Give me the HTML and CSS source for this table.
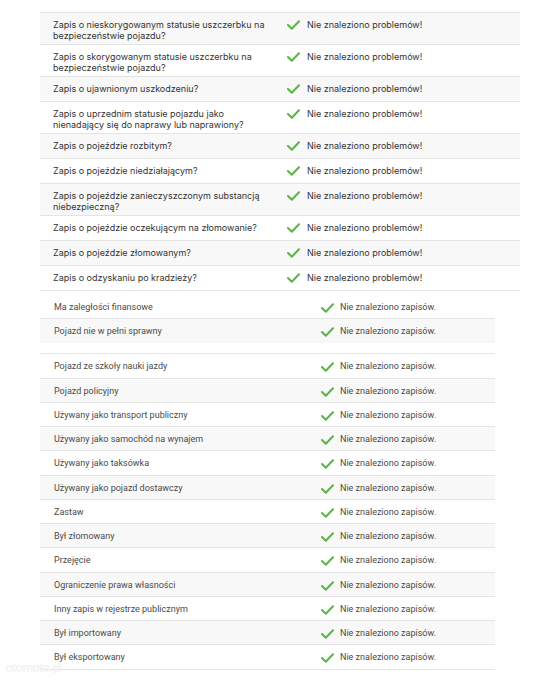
FILE: index.html
```html
<!DOCTYPE html>
<html lang="pl">
<head>
  <meta charset="UTF-8" />
  <meta name="viewport" content="width=device-width, initial-scale=1.0"/>
  <title>Historia pojazdu</title>
  <link rel="stylesheet" href="styles.css">
</head>
<body>

  <div class="report">
    <div class="checks">
      <div class="check-row alt"><div class="label">Zapis o nieskorygowanym statusie uszczerbku na bezpieczeństwie pojazdu?</div><div class="result"><svg class="tick" viewBox="0 0 13 10"><polyline points="1,5 4.8,8.8 12,1.2"/></svg>Nie znaleziono problemów!</div></div>
      <div class="check-row"><div class="label">Zapis o skorygowanym statusie uszczerbku na bezpieczeństwie pojazdu?</div><div class="result"><svg class="tick" viewBox="0 0 13 10"><polyline points="1,5 4.8,8.8 12,1.2"/></svg>Nie znaleziono problemów!</div></div>
      <div class="check-row alt"><div class="label">Zapis o ujawnionym uszkodzeniu?</div><div class="result"><svg class="tick" viewBox="0 0 13 10"><polyline points="1,5 4.8,8.8 12,1.2"/></svg>Nie znaleziono problemów!</div></div>
      <div class="check-row"><div class="label">Zapis o uprzednim statusie pojazdu jako nienadający się do naprawy lub naprawiony?</div><div class="result"><svg class="tick" viewBox="0 0 13 10"><polyline points="1,5 4.8,8.8 12,1.2"/></svg>Nie znaleziono problemów!</div></div>
      <div class="check-row alt"><div class="label">Zapis o pojeździe rozbitym?</div><div class="result"><svg class="tick" viewBox="0 0 13 10"><polyline points="1,5 4.8,8.8 12,1.2"/></svg>Nie znaleziono problemów!</div></div>
      <div class="check-row"><div class="label">Zapis o pojeździe niedziałającym?</div><div class="result"><svg class="tick" viewBox="0 0 13 10"><polyline points="1,5 4.8,8.8 12,1.2"/></svg>Nie znaleziono problemów!</div></div>
      <div class="check-row alt"><div class="label">Zapis o pojeździe zanieczyszczonym substancją niebezpieczną?</div><div class="result"><svg class="tick" viewBox="0 0 13 10"><polyline points="1,5 4.8,8.8 12,1.2"/></svg>Nie znaleziono problemów!</div></div>
      <div class="check-row"><div class="label">Zapis o pojeździe oczekującym na złomowanie?</div><div class="result"><svg class="tick" viewBox="0 0 13 10"><polyline points="1,5 4.8,8.8 12,1.2"/></svg>Nie znaleziono problemów!</div></div>
      <div class="check-row alt"><div class="label">Zapis o pojeździe złomowanym?</div><div class="result"><svg class="tick" viewBox="0 0 13 10"><polyline points="1,5 4.8,8.8 12,1.2"/></svg>Nie znaleziono problemów!</div></div>
      <div class="check-row"><div class="label">Zapis o odzyskaniu po kradzieży?</div><div class="result"><svg class="tick" viewBox="0 0 13 10"><polyline points="1,5 4.8,8.8 12,1.2"/></svg>Nie znaleziono problemów!</div></div>
    </div>

    <div class="records first">
      <div class="rec-row"><div class="label">Ma zaległości finansowe</div><div class="result"><svg class="tick" viewBox="0 0 13 10"><polyline points="1,5 4.8,8.8 12,1.2"/></svg>Nie znaleziono zapisów.</div></div>
      <div class="rec-row alt last"><div class="label">Pojazd nie w pełni sprawny</div><div class="result"><svg class="tick" viewBox="0 0 13 10"><polyline points="1,5 4.8,8.8 12,1.2"/></svg>Nie znaleziono zapisów.</div></div>
    </div>

    <div class="records">
      <div class="rec-row"><div class="label">Pojazd ze szkoły nauki jazdy</div><div class="result"><svg class="tick" viewBox="0 0 13 10"><polyline points="1,5 4.8,8.8 12,1.2"/></svg>Nie znaleziono zapisów.</div></div>
      <div class="rec-row alt"><div class="label">Pojazd policyjny</div><div class="result"><svg class="tick" viewBox="0 0 13 10"><polyline points="1,5 4.8,8.8 12,1.2"/></svg>Nie znaleziono zapisów.</div></div>
      <div class="rec-row"><div class="label">Używany jako transport publiczny</div><div class="result"><svg class="tick" viewBox="0 0 13 10"><polyline points="1,5 4.8,8.8 12,1.2"/></svg>Nie znaleziono zapisów.</div></div>
      <div class="rec-row alt"><div class="label">Używany jako samochód na wynajem</div><div class="result"><svg class="tick" viewBox="0 0 13 10"><polyline points="1,5 4.8,8.8 12,1.2"/></svg>Nie znaleziono zapisów.</div></div>
      <div class="rec-row"><div class="label">Używany jako taksówka</div><div class="result"><svg class="tick" viewBox="0 0 13 10"><polyline points="1,5 4.8,8.8 12,1.2"/></svg>Nie znaleziono zapisów.</div></div>
      <div class="rec-row alt"><div class="label">Używany jako pojazd dostawczy</div><div class="result"><svg class="tick" viewBox="0 0 13 10"><polyline points="1,5 4.8,8.8 12,1.2"/></svg>Nie znaleziono zapisów.</div></div>
      <div class="rec-row"><div class="label">Zastaw</div><div class="result"><svg class="tick" viewBox="0 0 13 10"><polyline points="1,5 4.8,8.8 12,1.2"/></svg>Nie znaleziono zapisów.</div></div>
      <div class="rec-row alt"><div class="label">Był złomowany</div><div class="result"><svg class="tick" viewBox="0 0 13 10"><polyline points="1,5 4.8,8.8 12,1.2"/></svg>Nie znaleziono zapisów.</div></div>
      <div class="rec-row"><div class="label">Przejęcie</div><div class="result"><svg class="tick" viewBox="0 0 13 10"><polyline points="1,5 4.8,8.8 12,1.2"/></svg>Nie znaleziono zapisów.</div></div>
      <div class="rec-row alt"><div class="label">Ograniczenie prawa własności</div><div class="result"><svg class="tick" viewBox="0 0 13 10"><polyline points="1,5 4.8,8.8 12,1.2"/></svg>Nie znaleziono zapisów.</div></div>
      <div class="rec-row"><div class="label">Inny zapis w rejestrze publicznym</div><div class="result"><svg class="tick" viewBox="0 0 13 10"><polyline points="1,5 4.8,8.8 12,1.2"/></svg>Nie znaleziono zapisów.</div></div>
      <div class="rec-row alt"><div class="label">Był importowany</div><div class="result"><svg class="tick" viewBox="0 0 13 10"><polyline points="1,5 4.8,8.8 12,1.2"/></svg>Nie znaleziono zapisów.</div></div>
      <div class="rec-row"><div class="label">Był eksportowany</div><div class="result"><svg class="tick" viewBox="0 0 13 10"><polyline points="1,5 4.8,8.8 12,1.2"/></svg>Nie znaleziono zapisów.</div></div>
    </div>
  </div>

  <div class="watermark">otomoto.pl</div>

</body>
</html>
```

FILE: styles.css
```css
body {
  background-color: #fff;
  margin: 0;
  padding: 12px 0 0 40px;
  font-family: Inter, "Noto Sans", sans-serif;
  color: #333;
}

.checks {
  width: 480px;
  border-top: 1px solid #e4e4e4;
}

.check-row {
  display: grid;
  grid-template-columns: 240px 1fr;
  box-sizing: border-box;
  min-height: 25px;
  padding: 6px 0 3px;
  border-bottom: 1px solid #e4e4e4;
  font-size: 9px;
  line-height: 11px;
}

.check-row .label {
  padding-left: 13px;
  padding-right: 8px;
}

.check-row .result {
  display: flex;
  align-items: flex-start;
  padding-left: 7px;
}

.alt {
  background-color: #f8f8f8;
}

.tick {
  width: 13px;
  height: 10px;
  flex: none;
  margin: 1px 7px 0 0;
  fill: none;
  stroke: #5cb346;
  stroke-width: 2;
  stroke-linecap: round;
  stroke-linejoin: round;
}

.records {
  width: 455px;
  border-top: 1px solid #e4e4e4;
}

.records.first {
  border-top: none;
  margin-top: 4px;
  padding-bottom: 10px;
}

.rec-row {
  display: grid;
  grid-template-columns: 274px 1fr;
  box-sizing: border-box;
  height: 24.25px;
  padding-top: 7px;
  border-bottom: 1px solid #e4e4e4;
  font-family: Roboto, "Noto Sans", sans-serif;
  font-size: 9px;
  line-height: 11px;
  color: #4a4a4a;
}

.rec-row.last {
  border-bottom: none;
  height: 24px;
}

.rec-row .label {
  padding-left: 14px;
}

.rec-row .result {
  display: flex;
  align-items: flex-start;
  padding-left: 7px;
}

.rec-row .tick {
  margin-right: 6px;
}

.watermark {
  position: absolute;
  left: 6px;
  top: 661px;
  font-family: "Liberation Sans", sans-serif;
  font-size: 12px;
  color: #f6f6f6;
  text-shadow: 0 0 1px #e2e2e2;
}
```
